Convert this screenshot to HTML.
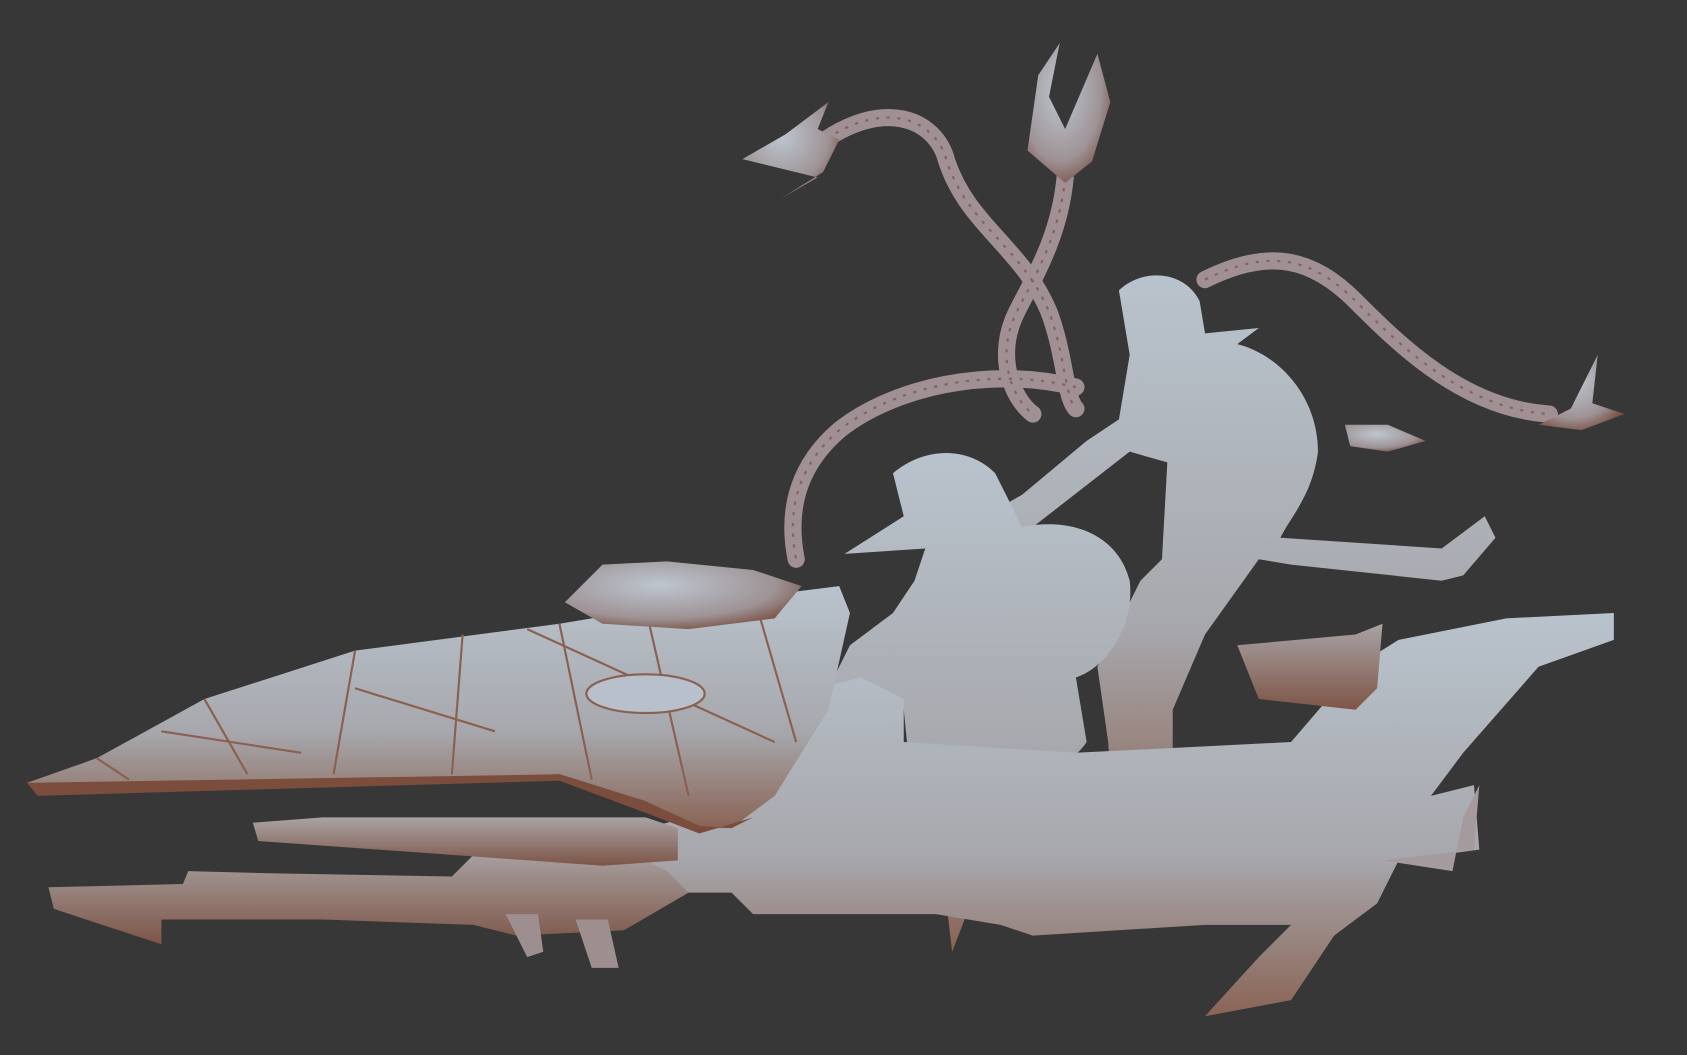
<!DOCTYPE html>
<html><head><meta charset="utf-8"><style>
html,body{margin:0;padding:0;background:#373737;}
svg{display:block;}
</style></head><body>
<svg width="1687" height="1055" viewBox="0 0 1568 981" preserveAspectRatio="none" xmlns="http://www.w3.org/2000/svg">
<defs>
<linearGradient id="g" x1="0" y1="0" x2="0" y2="1">
<stop offset="0" stop-color="#b9c3cd"/><stop offset="0.6" stop-color="#a7a8ad"/><stop offset="1" stop-color="#8a6455"/>
</linearGradient>
<linearGradient id="b" x1="0" y1="0" x2="0" y2="1">
<stop offset="0" stop-color="#a9a3a4"/><stop offset="1" stop-color="#7d5547"/>
</linearGradient>
<radialGradient id="r" cx="0.4" cy="0.35" r="0.7">
<stop offset="0" stop-color="#bdc6cf"/><stop offset="0.7" stop-color="#9e9396"/><stop offset="1" stop-color="#7a5244"/>
</radialGradient>
</defs>
<rect width="1568" height="981" fill="#373737"/>
<g fill="none" stroke="#a09093" stroke-width="16" stroke-linecap="round">
<path d="M760 135 C820 90 870 110 880 150 C900 210 950 230 975 290 C990 330 990 370 1000 380"/>
<path d="M990 165 C985 220 960 260 945 290 C925 330 940 370 960 385"/>
<path d="M1000 360 C920 340 830 360 780 400 C745 430 730 470 740 520"/>
<path d="M1120 260 C1180 230 1220 240 1260 280 C1300 320 1360 380 1440 385"/>
</g>
<g fill="none" stroke="#7f6460" stroke-width="2" stroke-dasharray="3 7">
<path d="M760 135 C820 90 870 110 880 150 C900 210 950 230 975 290 C990 330 990 370 1000 380"/>
<path d="M990 165 C985 220 960 260 945 290 C925 330 940 370 960 385"/>
<path d="M1000 360 C920 340 830 360 780 400 C745 430 730 470 740 520"/>
<path d="M1120 260 C1180 230 1220 240 1260 280 C1300 320 1360 380 1440 385"/>
</g>
<path d="M690 148 L730 125 L770 95 L760 120 L780 130 L765 160 L725 185 L760 165 Z" fill="url(#r)"/>
<path d="M955 140 L965 70 L985 40 L975 90 L990 120 L1020 50 L1032 95 L1015 150 L990 170 Z" fill="url(#r)"/>
<path d="M1430 395 L1460 380 L1485 330 L1480 375 L1510 385 L1470 400 Z" fill="url(#r)"/>
<path d="M1250 395 L1290 395 L1325 410 L1290 420 L1255 415 Z" fill="url(#r)"/>
<path d="M1040 270 C1060 250 1100 250 1115 280 L1120 310 L1170 305 L1150 320 C1190 330 1225 370 1225 420 C1220 460 1200 480 1190 500 L1340 510 L1380 480 L1390 500 L1360 535 L1340 540 L1200 525 L1170 520 L1120 590 L1090 660 L1090 760 L1100 790 L1040 800 L990 795 L1035 760 L1030 690 L1020 620 L1060 540 L1080 520 L1085 430 L1050 420 L960 490 L900 520 L880 500 L950 460 L1010 410 L1040 390 L1050 330 Z" fill="url(#g)"/>
<path d="M830 440 C860 415 900 415 925 440 L950 490 C1000 480 1040 500 1050 540 C1055 580 1030 620 1000 630 L1010 690 C990 720 950 720 920 710 L900 740 L935 790 L910 820 L885 885 L875 800 L850 760 L840 660 L800 660 L770 640 L790 600 L830 570 L850 540 L860 510 L785 515 L840 480 Z" fill="url(#g)"/>
<path d="M560 780 L640 760 L760 640 L800 630 L840 650 L840 690 L1000 700 L1200 690 L1260 620 L1300 595 L1400 575 L1500 570 L1500 595 L1430 620 L1360 700 L1330 740 L1370 730 L1375 790 L1300 800 L1280 840 L1240 870 L1200 930 L1120 945 L1170 890 L1200 860 L1120 860 L960 870 L930 860 L870 850 L700 850 L680 830 L600 830 Z" fill="url(#g)"/>
<path d="M45 825 L170 822 L175 810 L250 812 L420 815 L440 795 L500 790 L580 790 L620 810 L640 830 L580 865 L480 870 L440 860 L300 855 L150 855 L150 878 L95 860 L50 845 Z" fill="url(#b)"/>
<path d="M470 850 L500 850 L505 885 L490 890 Z M535 855 L565 855 L575 900 L550 900 Z" fill="#9d8f90"/>
<path d="M235 765 L300 760 L600 760 L630 770 L630 800 L560 805 L240 782 Z" fill="url(#b)"/>
<path d="M25 728 L90 705 L190 650 L330 605 L520 580 L640 560 L740 550 L780 545 L790 570 L770 660 L720 740 L680 770 L650 770 L600 745 L520 720 L40 738 Z" fill="url(#g)"/>
<path d="M25 728 L520 720 L600 745 L650 768 L680 770 L700 760 L650 775 L590 752 L520 726 L35 740 Z" fill="#7a4d3c"/>
<g stroke="#8a6050" stroke-width="2" fill="none">
<path d="M90 705 L120 725 M190 650 L230 720 M330 605 L310 720 M430 590 L420 720 M520 580 L550 725 M600 565 L640 740 M700 552 L740 690 M150 680 L280 700 M330 640 L460 680 M490 585 L720 690"/>
</g>
<ellipse cx="600" cy="645" rx="55" ry="18" fill="#b8c1cb" stroke="#8a6050" stroke-width="2"/>
<path d="M525 560 L560 525 L620 522 L700 530 L745 545 L720 575 L640 585 L560 580 Z" fill="url(#r)"/>
<path d="M1150 600 L1260 590 L1285 580 L1280 640 L1260 660 L1170 650 Z" fill="url(#b)"/>
<path d="M1285 800 L1350 810 L1360 760 L1375 730 L1370 790 Z" fill="#a59b9e"/>
</svg>
</body></html>
